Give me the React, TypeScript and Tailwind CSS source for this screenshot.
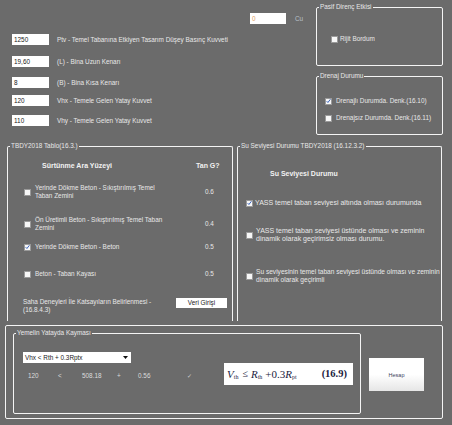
import React from "react";

const BG = "bg-[#6b6b6b]";

function GroupBox({
  title,
  className = "",
  openBottom = false,
  children,
}: {
  title: string;
  className?: string;
  openBottom?: boolean;
  children?: React.ReactNode;
}) {
  return (
    <div
      className={
        "relative border border-[#f4f4f4] " +
        (openBottom ? "border-b-0 rounded-t-[2px] " : "rounded-[2px] ") +
        className
      }
    >
      <span
        className={
          "absolute left-[2px] top-[-5px] px-[1px] leading-[8px] whitespace-nowrap " + BG
        }
      >
        {title}
      </span>
      {children}
    </div>
  );
}

function Check({ checked = false }: { checked?: boolean }) {
  return (
    <span className="flex h-[7px] w-[7px] shrink-0 items-center justify-center border border-[#9a9a9a] bg-[#f7f7f7]">
      {checked && (
        <svg width="6" height="6" viewBox="0 0 6 6">
          <path d="M0.8 3.2 L2.3 4.8 L5.3 0.9" fill="none" stroke="#2a56b8" strokeWidth="1.1" />
        </svg>
      )}
    </span>
  );
}

function TextBox({ value, className = "", color = "text-[#1a1a1a]" }: { value: string; className?: string; color?: string }) {
  return (
    <div className={"flex h-[11px] items-center bg-white pl-[2px] " + color + " " + className}>{value}</div>
  );
}

function InputRow({ value, label, mt }: { value: string; label: string; mt: string }) {
  return (
    <div className={"flex h-[11px] items-center " + mt}>
      <TextBox value={value} className="w-[37px]" />
      <span className="ml-[8px] whitespace-nowrap">{label}</span>
    </div>
  );
}

export default function App() {
  return (
    <div
      className={
        "h-[425px] w-[452px] overflow-hidden text-[6.4px] leading-[8px] text-[#e8e8e8] font-['Liberation_Sans',Arial,sans-serif] " +
        BG
      }
    >
      {/* Top section */}
      <div className="flex h-[146px]">
        <div className="flex w-[316px] flex-col pl-[12px]">
          <div className="flex h-[34px] items-start pl-[238px] pt-[13px]">
            <TextBox value="0" className="w-[36px]" color="text-[#e0a060]" />
            <span className="ml-[9px] mt-[2px] text-[#b8c0c8]">Cu</span>
          </div>
          <InputRow value="1250" label="Ptv - Temel Tabanına Etkiyen Tasarım Düşey Basınç Kuvveti" mt="mt-0" />
          <InputRow value="19,60" label="(L) - Bina Uzun Kenarı" mt="mt-[11px]" />
          <InputRow value="8" label="(B) - Bina Kısa Kenarı" mt="mt-[10px]" />
          <InputRow value="120" label="Vhx - Temele Gelen Yatay Kuvvet" mt="mt-[7px]" />
          <InputRow value="110" label="Vhy - Temele Gelen Yatay Kuvvet" mt="mt-[9px]" />
        </div>
        <div className="flex w-[127px] flex-col pt-[7px]">
          <GroupBox title="Pasif Direnç Etkisi" className="h-[59px]">
            <div className="ml-[14px] mt-[27px] flex items-center">
              <Check />
              <span className="ml-[2px]">Rijit Bordum</span>
            </div>
          </GroupBox>
          <GroupBox title="Drenaj Durumu" className="mt-[10px] h-[59px]">
            <div className="ml-[8px] mt-[20px] flex items-center">
              <Check checked />
              <span className="ml-[4px]">Drenajlı Durumda. Denk.(16.10)</span>
            </div>
            <div className="ml-[8px] mt-[9px] flex items-center">
              <Check />
              <span className="ml-[4px]">Drenajsız Durumda. Denk.(16.11)</span>
            </div>
          </GroupBox>
        </div>
      </div>

      {/* Middle section */}
      <div className="flex h-[175px]">
        <GroupBox title="TBDY2018 Tablo(16.3.)" openBottom className="ml-[7px] h-full w-[226px]">
          <div className="mt-[15px] flex h-[8px] items-center font-bold text-[7px] text-[#f2f2f2]">
            <span className="ml-[34px] w-[154px]">Sürtünme Ara Yüzeyi</span>
            <span>Tan G?</span>
          </div>
          <div className="mt-[14px] flex h-[16px] items-center">
            <span className="ml-[16px]"><Check /></span>
            <span className="ml-[4px] w-[170px]">Yerinde Dökme Beton - Sıkıştırılmış Temel<br />Taban Zemini</span>
            <span>0.6</span>
          </div>
          <div className="mt-[16px] flex h-[16px] items-center">
            <span className="ml-[16px]"><Check /></span>
            <span className="ml-[4px] w-[170px]">Ön Üretimli Beton - Sıkıştırılmış Temel Taban<br />Zemini</span>
            <span>0.4</span>
          </div>
          <div className="mt-[11px] flex h-[8px] items-center">
            <span className="ml-[16px]"><Check checked /></span>
            <span className="ml-[4px] w-[170px]">Yerinde Dökme Beton - Beton</span>
            <span>0.5</span>
          </div>
          <div className="mt-[19px] flex h-[8px] items-center">
            <span className="ml-[16px]"><Check /></span>
            <span className="ml-[4px] w-[170px]">Beton - Taban Kayası</span>
            <span>0.5</span>
          </div>
          <div className="mt-[20px] flex items-start">
            <span className="ml-[15px] w-[153px]">Saha Deneyleri İle Katsayıların Belirlenmesi -<br />(16.8.4.3)</span>
            <span className="flex h-[10px] w-[51px] items-center justify-center bg-white text-[#1a1a1a]">Veri Girişi</span>
          </div>
        </GroupBox>
        <GroupBox title="Su Seviyesi Durumu TBDY2018 (16.12.3.2)" openBottom className="ml-[4px] h-full w-[205px]">
          <div className="ml-[32px] mt-[23px] h-[8px] font-bold text-[7px] text-[#f2f2f2]">Su Seviyesi Durumu</div>
          <div className="mt-[21px] flex h-[8px] items-center">
            <span className="ml-[8px]"><Check checked /></span>
            <span className="ml-[2px] text-[7px]">YASS temel taban seviyesi altında olması durumunda</span>
          </div>
          <div className="mt-[20px] flex h-[16px] items-center">
            <span className="ml-[8px]"><Check /></span>
            <span className="ml-[3px] text-[7px]">YASS temel taban seviyesi üstünde olması ve zeminin<br />dinamik olarak geçirimsiz olması durumu.</span>
          </div>
          <div className="mt-[25px] flex h-[16px] items-center">
            <span className="ml-[8px]"><Check /></span>
            <span className="ml-[3px] text-[6.6px]">Su seviyesinin temel taban seviyesi üstünde olması ve zeminin<br />dinamik olarak geçirimli</span>
          </div>
        </GroupBox>
      </div>

      {/* Bottom section */}
      <div className="ml-[5px] mt-[4px] flex h-[94px] w-[438px] rounded-[2px] border border-[#f4f4f4]">
        <GroupBox title="Yemelin Yatayda Kayması" className="ml-[7px] mt-[7px] flex h-[81px] w-[348px]">
          <div className="flex w-[210px] flex-col pl-[9px] pt-[18px]">
            <div className="flex h-[11px] w-[108px] items-center justify-between bg-white pl-[2px] pr-[3px] text-[#1a1a1a]">
              <span>Vhx &lt; Rth + 0.3Rptx</span>
              <svg width="5" height="3" viewBox="0 0 5 3">
                <path d="M0 0 L5 0 L2.5 3 Z" fill="#111" />
              </svg>
            </div>
            <div className="ml-[5px] mt-[9px] flex h-[8px] items-center text-[#dcdcdc]">
              <span className="w-[30px]">120</span>
              <span className="w-[24px]">&lt;</span>
              <span className="w-[35px]">508.18</span>
              <span className="w-[21px]">+</span>
              <span className="w-[49px]">0.56</span>
              <span className="text-[6px] text-[#cfcfcf]">✓</span>
            </div>
          </div>
          <div className="mt-[29px] flex h-[22px] w-[129px] items-center bg-white pl-[3px] pr-[6px] font-['Liberation_Serif',serif] text-[#1c1c40]">
            <span className="text-[11px] italic leading-none">V</span>
            <span className="mt-[5px] text-[6px] leading-none">th</span>
            <span className="ml-[4px] text-[10px] leading-none">≤</span>
            <span className="ml-[3px] text-[11px] italic leading-none">R</span>
            <span className="mt-[5px] text-[6px] leading-none">th</span>
            <span className="ml-[3px] text-[11px] leading-none">+0.3</span>
            <span className="text-[11px] italic leading-none">R</span>
            <span className="mt-[5px] text-[6px] leading-none">pt</span>
            <span className="ml-auto text-[10.5px] font-bold leading-none">(16.9)</span>
          </div>
        </GroupBox>
        <div className="ml-[8px] mt-[32px] flex h-[33px] w-[55px] items-center justify-center bg-gradient-to-b from-white via-white to-[#e6e6e6] text-[5.5px] text-[#3a4060]">
          Hesap
        </div>
      </div>
    </div>
  );
}
